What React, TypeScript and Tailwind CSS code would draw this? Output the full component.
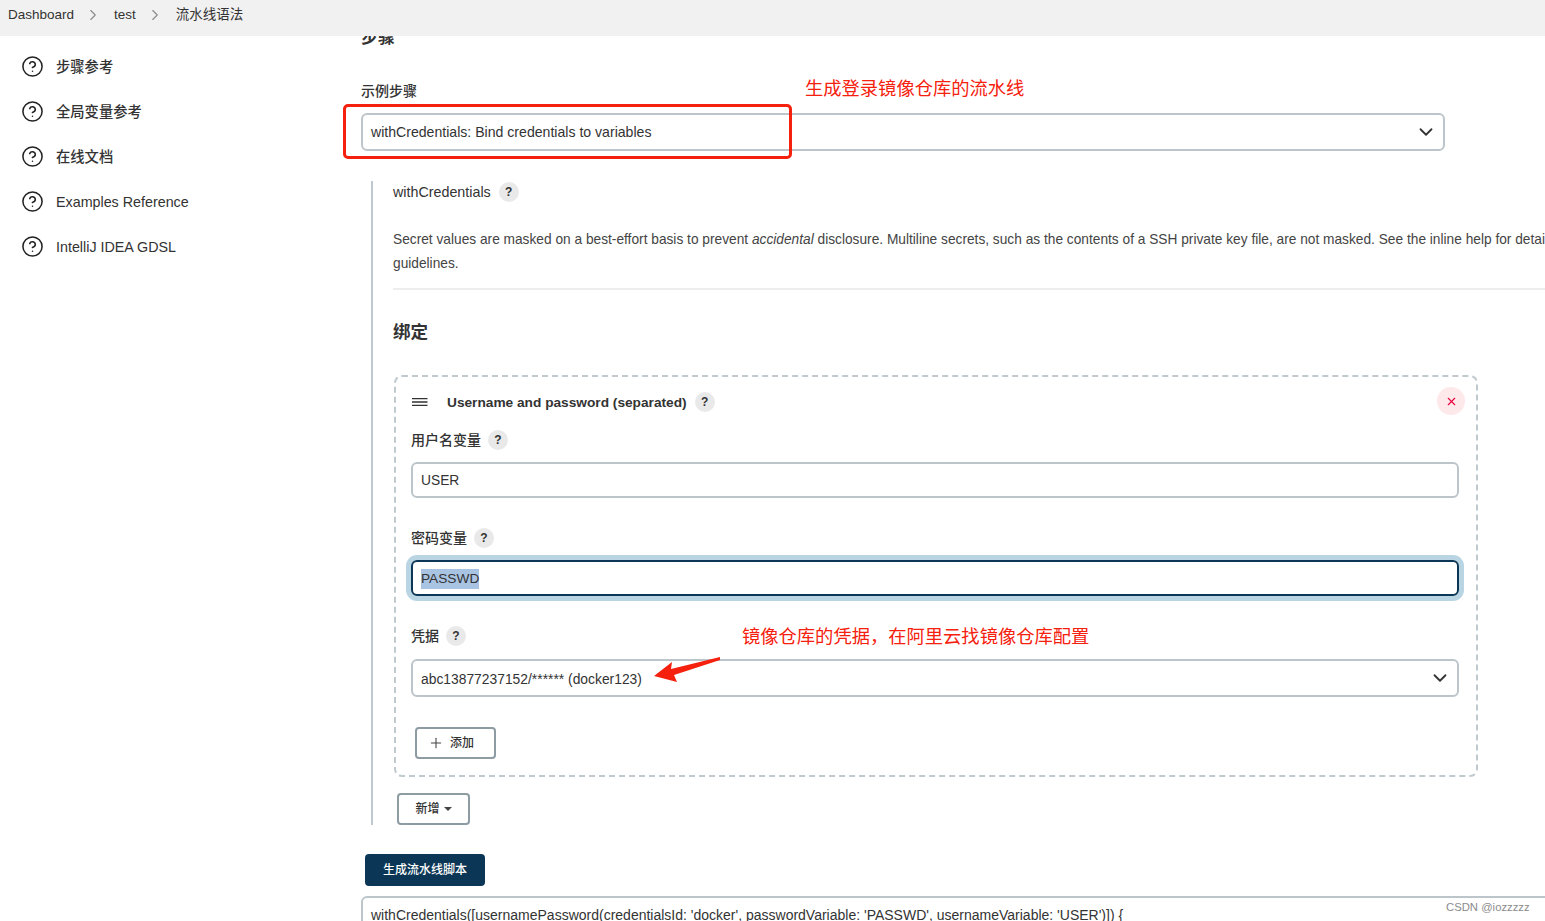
import React from 'react';
import { ChevronDown, ChevronRight, CircleHelp, Plus, X } from 'lucide-react';

const FONT = "font-['Liberation_Sans','Noto_Sans_CJK_SC',sans-serif]";

const sideLinks = ['步骤参考', '全局变量参考', '在线文档', 'Examples Reference', 'IntelliJ IDEA GDSL'];

function Help() {
  return (
    <span className="flex h-5 w-5 shrink-0 items-center justify-center rounded-full bg-[#e9e9e9] text-xs font-bold text-[#333]">
      ?
    </span>
  );
}

function FieldLabel({ text, className }: { text: string; className: string }) {
  return (
    <div className={`flex h-5 items-center gap-[7px] text-sm font-medium text-[#333] ${className}`}>
      <span>{text}</span>
      <Help />
    </div>
  );
}

function SelectBox({ value, className }: { value: string; className: string }) {
  return (
    <div className={`flex h-[38px] items-center justify-between rounded-md border-2 border-[#bcc6ca] bg-white pl-2 pr-[6px] text-[#333] ${className}`}>
      <span className="pt-[2px]">{value}</span>
      <ChevronDown className="h-[22px] w-[22px] text-[#333]" strokeWidth={2} />
    </div>
  );
}

function Breadcrumb() {
  return (
    <header className="relative z-10 flex h-9 shrink-0 items-center bg-[#f1f1f1] pb-[6px] pl-2 text-[13.5px] text-[#333]">
      <span>Dashboard</span>
      <ChevronRight className="ml-[10px] h-[18px] w-[18px] text-[#8a8a8a]" strokeWidth={1.5} />
      <span className="ml-3">test</span>
      <ChevronRight className="ml-[10px] h-[18px] w-[18px] text-[#8a8a8a]" strokeWidth={1.5} />
      <span className="ml-3">流水线语法</span>
    </header>
  );
}

function Sidebar() {
  return (
    <aside className="flex w-[361px] shrink-0 flex-col gap-[21px] pl-[21px] pt-[18px]">
      {sideLinks.map((link) => (
        <div key={link} className="flex h-6 items-center gap-[12px] text-[14.3px] font-medium text-[#333]">
          <CircleHelp className="h-[23px] w-[23px] text-[#222]" strokeWidth={1.6} />
          <span className="pt-[3px]">{link}</span>
        </div>
      ))}
    </aside>
  );
}

function BindingCard() {
  return (
    <div className="relative ml-px mt-[31px] h-[402px] w-[1084px] rounded-lg border-2 border-dashed border-[#c0c9ce] pl-[15px] pr-[17px] pt-[15px]">
      <div className="flex h-5 items-center text-[13.7px] font-semibold text-[#333]">
        <svg width="18" height="18" viewBox="0 0 18 18" className="text-[#333]">
          <path d="M1 5.7h15.5M1 9h15.5M1 12.3h15.5" stroke="currentColor" strokeWidth="1.3" fill="none" />
        </svg>
        <span className="ml-[18px] pt-[2px]">Username and password (separated)</span>
        <span className="ml-2">
          <Help />
        </span>
      </div>
      <button className="absolute right-[11px] top-[10px] flex h-7 w-7 items-center justify-center rounded-full bg-[#fde8ea]">
        <X className="h-[13px] w-[13px] text-[#e6003c]" strokeWidth={2} />
      </button>

      <FieldLabel text="用户名变量" className="mt-[18px]" />
      <div className="mt-3 flex h-9 items-center rounded-md border-2 border-[#bcc6ca] pl-2 pt-[2px] text-[13.8px] text-[#333]">USER</div>

      <FieldLabel text="密码变量" className="mt-[30px]" />
      <div className="mt-[12px] flex h-9 items-center rounded-md border-2 border-[#0b3655] pl-2 pt-[2px] text-[13.7px] text-[#333] shadow-[0_0_0_5px_#b9d5e3]">
        <span className="bg-[#a9c4e2]">PASSWD</span>
      </div>

      <FieldLabel text="凭据" className="mt-[30px]" />
      <SelectBox value="abc13877237152/****** (docker123)" className="mt-[13px] text-[13.85px]" />

      <button className="ml-1 mt-[30px] flex h-8 w-[81px] items-center rounded border-2 border-[#8d9ba3] pl-[11px] text-xs font-medium text-[#333]">
        <Plus className="h-4 w-4 text-[#444]" strokeWidth={1.6} />
        <span className="ml-[6px]">添加</span>
      </button>
    </div>
  );
}

function Annotations() {
  return (
    <>
      <div className="absolute left-[343px] top-[104px] h-[55px] w-[449px] rounded-[5px] border-[3px] border-[#f5200d]" />
      <div className="absolute left-[805px] top-[77px] text-[18.3px] leading-6 text-[#f5200d]">生成登录镜像仓库的流水线</div>
      <div className="absolute left-[742px] top-[625px] text-[18.3px] leading-6 text-[#f5200d]">镜像仓库的凭据，在阿里云找镜像仓库配置</div>
      <svg className="absolute left-[650px] top-[654px]" width="74" height="32" viewBox="0 0 74 32">
        <path d="M4 22 L22 8 L21 15 L70 3 L70 6 L24 21 L27 28 Z" fill="#f5200d" />
      </svg>
      <div className="absolute left-[1446px] top-[899px] text-[11.3px] leading-4 text-[#8c8c8c]">CSDN @iozzzzz</div>
    </>
  );
}

export default function App() {
  return (
    <div className={`relative flex h-[921px] w-[1545px] flex-col overflow-hidden bg-white ${FONT}`}>
      <Breadcrumb />
      <div className="flex min-h-0 flex-1">
        <Sidebar />
        <main className="min-w-0 flex-1">
          <h2 className="-mt-[9px] h-[22px] text-[17px] font-semibold leading-[22px] text-[#333]">步骤</h2>
          <div className="mt-8 flex h-5 items-center text-sm font-medium text-[#333]">示例步骤</div>
          <SelectBox value="withCredentials: Bind credentials to variables" className="mt-3 w-[1084px] text-[14.1px]" />

          <section className="ml-[10px] mt-[30px] h-[644px] w-[1400px] border-l-2 border-[#c0c9ce] pl-[20px] pt-px">
            <div className="flex h-5 items-center gap-2 text-[14.3px] font-medium text-[#333]">
              <span className="pt-[2px]">withCredentials</span>
              <Help />
            </div>
            <p className="mt-[26px] whitespace-nowrap text-[13.73px] leading-6 text-[#444]">
              Secret values are masked on a best-effort basis to prevent <em>accidental</em> disclosure. Multiline secrets, such as the contents of a SSH private key file, are not masked. See the inline help for details and usage
              <br />
              guidelines.
            </p>
            <div className="mt-3 border-t-2 border-[#ededed]" />
            <h3 className="mt-[30px] text-[17.5px] font-semibold leading-6 text-[#333]">绑定</h3>
            <BindingCard />
            <button className="ml-1 mt-4 flex h-8 w-[73px] items-center justify-center gap-1 rounded border-2 border-[#8d9ba3] text-xs font-medium text-[#333]">
              <span>新增</span>
              <span className="h-0 w-0 border-x-4 border-t-4 border-x-transparent border-t-[#444]" />
            </button>
          </section>

          <button className="ml-1 mt-[29px] h-8 w-[120px] rounded bg-[#0b3655] text-xs font-medium text-white">生成流水线脚本</button>
          <div className="mt-[10px] h-12 w-[1400px] rounded-md border-2 border-[#bcc6ca] pl-2 pt-[7px] text-sm leading-5 text-[#333]">
            withCredentials([usernamePassword(credentialsId: 'docker', passwordVariable: 'PASSWD', usernameVariable: 'USER')]) {'{'}
          </div>
        </main>
      </div>
      <Annotations />
    </div>
  );
}
